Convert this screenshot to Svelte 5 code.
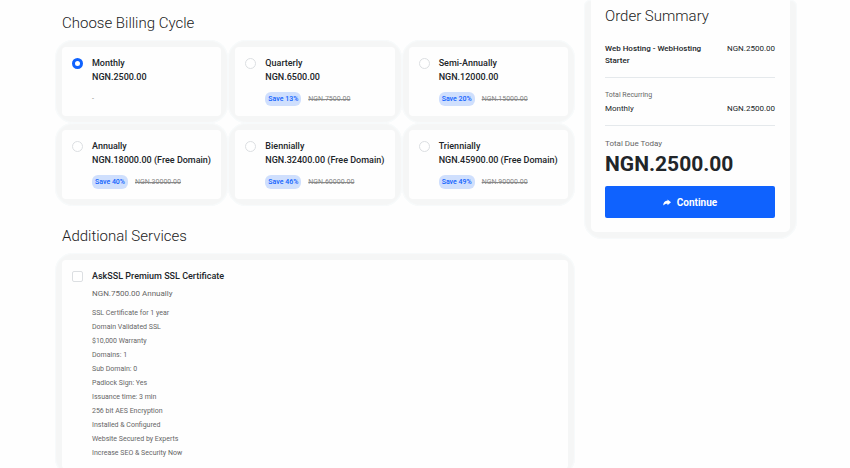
<script>
  let cycle = $state('Monthly');
  let ssl = $state(false);

  const cycles = [
    { name: 'Monthly', price: 'NGN.2500.00' },
    { name: 'Quarterly', price: 'NGN.6500.00', save: 'Save 13%', old: 'NGN.7500.00' },
    { name: 'Semi-Annually', price: 'NGN.12000.00', save: 'Save 20%', old: 'NGN.15000.00' },
    { name: 'Annually', price: 'NGN.18000.00 (Free Domain)', save: 'Save 40%', old: 'NGN.30000.00' },
    { name: 'Biennially', price: 'NGN.32400.00 (Free Domain)', save: 'Save 46%', old: 'NGN.60000.00' },
    { name: 'Triennially', price: 'NGN.45900.00 (Free Domain)', save: 'Save 49%', old: 'NGN.90000.00' }
  ];

  const features = [
    'SSL Certificate for 1 year',
    'Domain Validated SSL',
    '$10,000 Warranty',
    'Domains: 1',
    'Sub Domain: 0',
    'Padlock Sign: Yes',
    'Issuance time: 3 min',
    '256 bit AES Encryption',
    'Installed & Configured',
    'Website Secured by Experts',
    'Increase SEO & Security Now'
  ];
</script>

<div class="page">
  <main>
    <h2>Choose Billing Cycle</h2>
    <div class="cycles">
      {#each cycles as item}
        <div class="halo">
          <label class="card">
            <input type="radio" name="cycle" value={item.name} bind:group={cycle} />
            <span class="info">
              <span class="name">{item.name}</span>
              <span class="name">{item.price}</span>
              <span class="deal">
                {#if item.save}
                  <span class="save">{item.save}</span>
                  <s>{item.old}</s>
                {:else}
                  -
                {/if}
              </span>
            </span>
          </label>
        </div>
      {/each}
    </div>

    <h2 class="services">Additional Services</h2>
    <div class="halo">
      <div class="card">
        <input type="checkbox" id="ssl" bind:checked={ssl} />
        <div class="info">
          <label class="name" for="ssl">AskSSL Premium SSL Certificate</label>
          <p class="addon-price">NGN.7500.00 Annually</p>
          <ul>
            {#each features as feature}
              <li>{feature}</li>
            {/each}
          </ul>
        </div>
      </div>
    </div>
  </main>

  <aside class="halo summary-halo">
    <div class="summary">
      <h2>Order Summary</h2>
      <div class="row product">
        <strong>Web Hosting - WebHosting Starter</strong>
        <span>NGN.2500.00</span>
      </div>
      <div class="recurring">
        <p class="muted">Total Recurring</p>
        <div class="row">
          <span>Monthly</span>
          <span>NGN.2500.00</span>
        </div>
      </div>
      <p class="muted due">Total Due Today</p>
      <p class="total">NGN.2500.00</p>
      <button type="button">
        <svg viewBox="0 0 16 14" aria-hidden="true">
          <path d="M9 0.8 16 6.6 9 12.4V9.6C5.5 9.4 3 10.2 0.8 13.2 0.2 7 4 3.6 9 3.5Z" fill="currentColor" />
        </svg>
        Continue
      </button>
    </div>
  </aside>
</div>

<style>
  :global(body) {
    background: #fefefe;
  }

  .page {
    display: grid;
    grid-template-columns: 520fr 213fr;
    gap: 9px;
    align-items: start;
    box-sizing: border-box;
    height: 100vh;
    padding: 0 53px 0 55px;
    overflow: hidden;
    font-family: Roboto, sans-serif;
    font-size: 9px;
    line-height: 14px;
    color: #212529;
  }

  h2,
  p,
  ul {
    margin: 0;
    padding: 0;
  }

  h2 {
    font-size: 15px;
    font-weight: 300;
    line-height: 20px;
    color: #222;
  }

  main h2 {
    padding: 13px 7px 7px;
  }

  main .services {
    padding-top: 20px;
  }

  .cycles {
    display: grid;
    grid-template-columns: repeat(3, 1fr);
  }

  .halo {
    padding: 7px;
    background: #f5f6f6;
    border-radius: 18px;
    box-shadow: inset 0 0 1px 1px #f8fbfc;
  }

  .card {
    display: flex;
    align-items: flex-start;
    gap: 9px;
    padding: 9px 10px;
    background: #fefefe;
    border-radius: 4px;
  }

  .cycles .card {
    min-height: 51px;
  }

  input {
    flex: none;
    appearance: none;
    box-sizing: border-box;
    width: 11px;
    height: 11px;
    margin: 2px 0 0;
    background: #fff;
    border: 1px solid #dcdfe2;
    border-radius: 2px;
  }

  input[type='radio'] {
    border-radius: 50%;
  }

  input[type='radio']:checked {
    border: 3px solid #0f62fe;
  }

  input[type='checkbox']:checked {
    background: #0f62fe;
  }

  .name {
    display: block;
    font-weight: 500;
  }

  .deal {
    display: flex;
    align-items: center;
    gap: 7px;
    margin-top: 8px;
    font-size: 7px;
    color: #888;
  }

  .save {
    padding: 0 3px;
    font-weight: 500;
    color: #0f62fe;
    background: #cfdffd;
    border-radius: 6px;
  }

  .addon-price {
    margin-top: 4px;
    color: #666;
    font-size: 8px;
  }

  ul {
    margin-top: 5px;
    list-style: none;
    font-size: 7px;
    color: #666;
  }

  .summary-halo {
    padding-top: 0;
    border-radius: 6px 6px 18px 18px;
  }

  .summary {
    padding: 6px 15px 14px 14px;
    background: #fefefe;
    border-radius: 0 0 5px 5px;
  }

  .row {
    display: flex;
    justify-content: space-between;
    gap: 20px;
    font-size: 8px;
  }

  .product {
    padding: 17px 0 10px;
    line-height: 12px;
    border-bottom: 1px solid #e5e9ec;
  }

  .product strong {
    font-weight: 500;
  }

  .recurring {
    padding: 10px 0 9px;
    border-bottom: 1px solid #e5e9ec;
  }

  .muted {
    font-size: 7px;
    color: #666;
  }

  .due {
    margin-top: 11px;
    font-size: 8px;
  }

  .total {
    font-size: 21px;
    font-weight: 700;
    line-height: 26px;
  }

  button {
    display: flex;
    align-items: center;
    justify-content: center;
    gap: 6px;
    width: 100%;
    height: 32px;
    margin-top: 9px;
    padding: 0;
    border: 0;
    border-radius: 2px;
    background: #0f62fe;
    color: #fff;
    font-family: inherit;
    font-size: 10px;
    font-weight: 700;
  }

  svg {
    width: 8px;
    height: 7px;
  }
</style>
